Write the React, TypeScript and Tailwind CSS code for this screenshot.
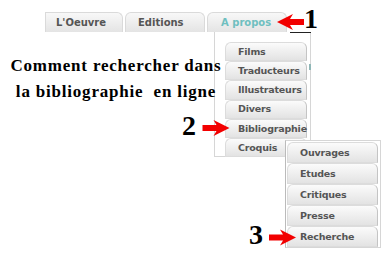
import React from "react";

const tabs = [
    { label: "L'Oeuvre", w: "w-[78px]", pl: "pl-[10px]", first: true },
    { label: "Editions", w: "w-[80px]", pl: "pl-[12px]" },
    { label: "A propos", w: "w-[80px]", pl: "pl-[13px]", active: true },
];

const aboutItems = ["Films", "Traducteurs", "Illustrateurs", "Divers", "Bibliographie", "Croquis"];
const biblioItems = ["Ouvrages", "Etudes", "Critiques", "Presse", "Recherche"];

const menuFont = { fontFamily: '"DejaVu Sans", Verdana, sans-serif' };
const serif = { fontFamily: '"Liberation Serif", "Times New Roman", serif' };

const MenuItem = ({ label, h }: { label: string; h: string }) => (
    <div
        className={`${h} flex items-center pl-[12px] rounded-t-[6px] border border-[#dcdcdc] border-r-[#c4c4c4] bg-gradient-to-b from-[#fbfbfb] to-[#e3e3e3] text-[9.5px] tracking-[-0.2px] font-bold text-[#555] leading-none whitespace-nowrap`}
        style={menuFont}
    >
        {label}
    </div>
);

// red block arrow, drawn pointing right; flipped for the left one
const RedArrow = ({ className, flip }: { className: string; flip?: boolean }) => (
    <svg className={className} viewBox="0 0 27 16" style={flip ? { transform: "scaleX(-1)" } : undefined}>
        <polygon points="0,5 14,5 11,0 27,8 11,16 14,11 0,11" fill="#f20000" />
    </svg>
);

const Num = ({ n }: { n: string }) => (
    <span className="text-[28px] font-bold leading-[28px] text-black" style={serif}>
        {n}
    </span>
);

export default function App() {
    return (
        <div className="relative w-[390px] h-[264px] bg-white overflow-hidden">
            {/* Tab bar */}
            <div className="flex gap-[2px] pt-[12px] pl-[45px]" style={menuFont}>
                {tabs.map((t) => (
                    <div
                        key={t.label}
                        className={`${t.w} ${t.pl} h-[20px] flex items-center border border-b-0 border-[#dadada] bg-gradient-to-b from-[#f8f8f8] to-[#e4e4e4] text-[10px] font-bold leading-none ${t.first ? "rounded-tr-[6px]" : "rounded-t-[6px]"} ${t.active ? "text-[#6fbfc0]" : "text-[#555]"}`}
                    >
                        {t.label}
                    </div>
                ))}
            </div>

            {/* Heading */}
            <div
                className="relative z-10 w-[232px] mt-[21px] text-center text-[17px] font-bold leading-[26px] tracking-[0.8px] text-black"
                style={serif}
            >
                <div>Comment rechercher dans</div>
                <div className="whitespace-pre">la bibliographie  en ligne</div>
            </div>

            {/* A propos dropdown */}
            <div className="absolute left-[214px] top-[32px] w-[97px] h-[125px] bg-white border border-t-0 border-[#d6d6d6] pt-[10px] pl-[10px]">
                <div className="flex flex-col w-[82px]">
                    {aboutItems.map((it) => (
                        <MenuItem key={it} label={it} h="h-[19.2px]" />
                    ))}
                </div>
                <div className="absolute left-[94px] top-[32px] w-[2px] h-[6px] bg-[#8fb7b7]" />
            </div>

            {/* Bibliographie submenu */}
            <div className="absolute left-[285px] top-[140px] w-[96px] h-[108px] bg-white border border-[#d6d6d6] border-l-[#bbbbbb] border-l-dotted pt-[1px] pl-[1px]">
                <div className="flex flex-col w-[91px]">
                    {biblioItems.map((it) => (
                        <MenuItem key={it} label={it} h="h-[21px]" />
                    ))}
                </div>
            </div>

            {/* Annotations */}
            <div className="absolute left-[277px] top-[5px] flex items-end">
                <RedArrow className="w-[27px] h-[16px] mb-[3px]" flip />
                <Num n="1" />
                <div className="absolute left-[13px] bottom-[0px] w-[21px] h-px bg-[#222]" />
            </div>
            <div className="absolute left-[182px] top-[112px] flex items-center gap-[5px]">
                <Num n="2" />
                <RedArrow className="w-[30px] h-[16px] mt-[4px]" />
            </div>
            <div className="absolute left-[249px] top-[221px] flex items-center gap-[6px]">
                <Num n="3" />
                <RedArrow className="w-[27px] h-[17px] mt-[4px]" />
            </div>
        </div>
    );
}
